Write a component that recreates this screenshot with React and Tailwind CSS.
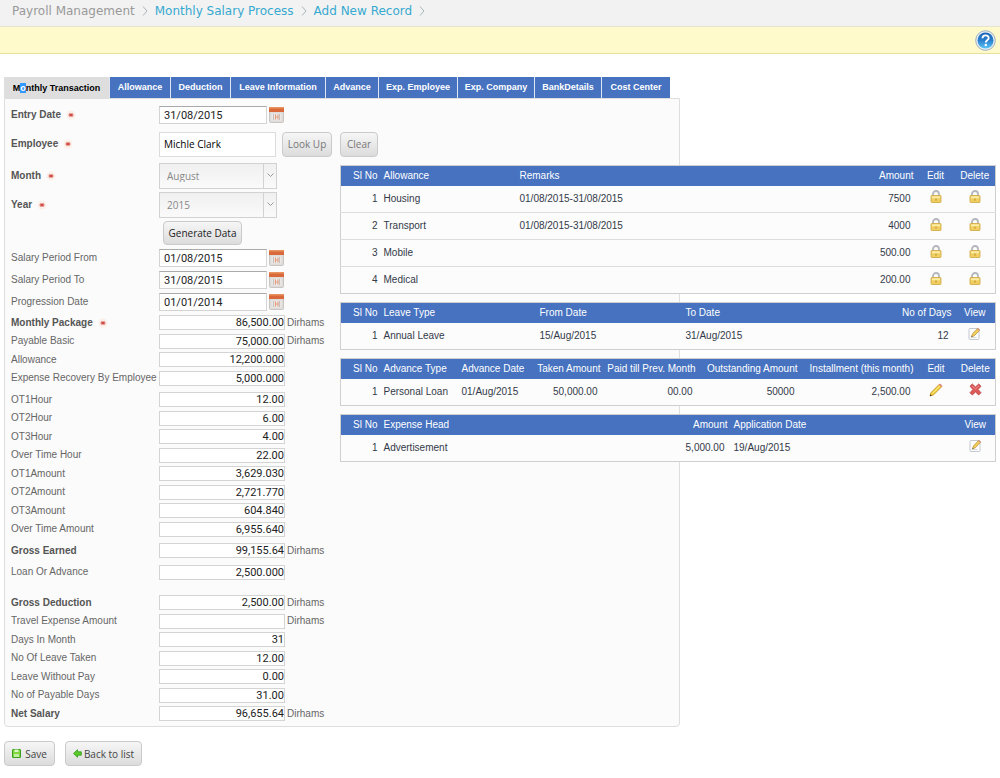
import React from 'react';

const tabs = [
  { label: 'Allowance', width: 'w-[61px]' },
  { label: 'Deduction', width: 'w-[60px]' },
  { label: 'Leave Information', width: 'w-[95px]' },
  { label: 'Advance', width: 'w-[53px]' },
  { label: 'Exp. Employee', width: 'w-[79px]' },
  { label: 'Exp. Company', width: 'w-[77px]' },
  { label: 'BankDetails', width: 'w-[67px]' },
  { label: 'Cost Center', width: 'w-[69px]' },
];

const dateRows = [
  { label: 'Salary Period From', value: '01/08/2015' },
  { label: 'Salary Period To', value: '31/08/2015' },
  { label: 'Progression Date', value: '01/01/2014' },
];

const packageRows = [
  { label: 'Monthly Package', value: '86,500.00', unit: true, bold: true, required: true },
  { label: 'Payable Basic', value: '75,000.00', unit: true },
  { label: 'Allowance', value: '12,200.000' },
  { label: 'Expense Recovery By Employee', value: '5,000.000' },
];

const overtimeRows = [
  { label: 'OT1Hour', value: '12.00' },
  { label: 'OT2Hour', value: '6.00' },
  { label: 'OT3Hour', value: '4.00' },
  { label: 'Over Time Hour', value: '22.00' },
  { label: 'OT1Amount', value: '3,629.030' },
  { label: 'OT2Amount', value: '2,721.770' },
  { label: 'OT3Amount', value: '604.840' },
  { label: 'Over Time Amount', value: '6,955.640' },
];

const earnedRows = [
  { label: 'Gross Earned', value: '99,155.64', unit: true, bold: true },
  { label: 'Loan Or Advance', value: '2,500.000' },
];

const deductionRows = [
  { label: 'Gross Deduction', value: '2,500.00', unit: true, bold: true },
  { label: 'Travel Expense Amount', value: '', unit: true },
  { label: 'Days In Month', value: '31' },
  { label: 'No Of Leave Taken', value: '12.00' },
  { label: 'Leave Without Pay', value: '0.00' },
  { label: 'No of Payable Days', value: '31.00' },
  { label: 'Net Salary', value: '96,655.64', unit: true, bold: true },
];

const allowanceTable = {
  columns: [
    { label: 'Sl No', width: 'w-[40px]', right: true },
    { label: 'Allowance', width: 'w-[136px]' },
    { label: 'Remarks', width: 'w-auto' },
    { label: 'Amount', width: 'w-[70px]', right: true, number: true },
    { label: 'Edit', width: 'w-[38px]', icon: 'lock' },
    { label: 'Delete', width: 'w-[41px]', icon: 'lock' },
  ],
  rows: [
    ['1', 'Housing', '01/08/2015-31/08/2015', '7500'],
    ['2', 'Transport', '01/08/2015-31/08/2015', '4000'],
    ['3', 'Mobile', '', '500.00'],
    ['4', 'Medical', '', '200.00'],
  ],
};

const leaveTable = {
  columns: [
    { label: 'Sl No', width: 'w-[40px]', right: true },
    { label: 'Leave Type', width: 'w-[156px]' },
    { label: 'From Date', width: 'w-[146px]' },
    { label: 'To Date', width: 'w-auto' },
    { label: 'No of Days', width: 'w-[90px]', right: true, number: true },
    { label: 'View', width: 'w-[41px]', icon: 'note' },
  ],
  rows: [['1', 'Annual Leave', '15/Aug/2015', '31/Aug/2015', '12']],
};

const advanceTable = {
  columns: [
    { label: 'Sl No', width: 'w-[40px]', right: true },
    { label: 'Advance Type', width: 'w-[78px]' },
    { label: 'Advance Date', width: 'w-[72px]' },
    { label: 'Taken Amount', width: 'w-[73px]', right: true, number: true },
    { label: 'Paid till Prev. Month', width: 'w-[95px]', right: true, number: true },
    { label: 'Outstanding Amount', width: 'w-[102px]', right: true, number: true },
    { label: 'Installment (this month)', width: 'w-auto', right: true, number: true },
    { label: 'Edit', width: 'w-[39px]', icon: 'pencil' },
    { label: 'Delete', width: 'w-[40px]', icon: 'cross' },
  ],
  rows: [['1', 'Personal Loan', '01/Aug/2015', '50,000.00', '00.00', '50000', '2,500.00']],
};

const expenseTable = {
  columns: [
    { label: 'Sl No', width: 'w-[40px]', right: true },
    { label: 'Expense Head', width: 'w-[240px]' },
    { label: 'Amount', width: 'w-[110px]', right: true, number: true },
    { label: 'Application Date', width: 'w-auto' },
    { label: 'View', width: 'w-[40px]', icon: 'note' },
  ],
  rows: [['1', 'Advertisement', '5,000.00', '19/Aug/2015']],
};

const LockIcon = () => (
  <svg width="12" height="13" viewBox="0 0 12 13" aria-hidden="true">
    <path d="M3 7V4a3 3 0 0 1 6 0v3" fill="none" stroke="#b4b7bd" strokeWidth="1.8" />
    <rect x="1" y="5.5" width="10" height="7" rx="0.8" fill="#efce62" stroke="#cfa63c" strokeWidth="0.8" />
    <rect x="2" y="6.3" width="8" height="2" fill="#fbeca6" />
    <rect x="5.4" y="8.5" width="1.2" height="2.2" fill="#c79a2b" />
  </svg>
);

const NoteIcon = () => (
  <svg width="13" height="13" viewBox="0 0 13 13" aria-hidden="true">
    <rect x="1" y="1.5" width="10" height="11" rx="1" fill="#fdfdfd" stroke="#c4c8cf" />
    <path d="M2.5 10.5h6" stroke="#d5d9de" />
    <path d="M3.5 9.8l.9-2.8 5.2-5.6 2 1.8-5.3 5.6z" fill="#f1cf5b" stroke="#b58a34" strokeWidth="0.7" />
    <path d="M9 2l.9-1 2 1.8-.9 1z" fill="#de8f80" />
    <path d="M3.4 10l.4-1.3.9.8z" fill="#4f4a3c" />
  </svg>
);

const PencilIcon = () => (
  <svg width="14" height="14" viewBox="0 0 14 14" aria-hidden="true">
    <path d="M1 13l1.2-3.6L10.4 1.2l2.4 2.4-8.2 8.2z" fill="#f5cf3a" stroke="#b98c1e" strokeWidth="0.8" />
    <path d="M3.4 10.4L11.3 2.500" stroke="#fdf0a4" strokeWidth="0.9" />
    <path d="M9.800 1.800l.8-.9c.8-.6 2.900 1.400 2.300 2.400l-.8.9z" fill="#e08c76" />
    <path d="M.8 13.200l.6-2 1.400 1.400z" fill="#4a3f28" />
  </svg>
);

const CrossIcon = () => (
  <svg width="13" height="13" viewBox="0 0 13 13" aria-hidden="true">
    <path
      d="M1 3.200L3.300 1l3.200 3L9.700 1 12 3.200 9 6.500l3 3.200L9.700 12 6.500 9l-3.200 3L1 9.700l3-3.200z"
      fill="#dc5a58"
      stroke="#b93a3c"
      strokeWidth="0.8"
      strokeLinejoin="round"
    />
    <path d="M3 2.800l3.500 3.200L10 2.800" fill="none" stroke="#ee9a96" strokeWidth="0.9" />
  </svg>
);

const CalendarIcon = () => (
  <svg width="15" height="16" viewBox="0 0 15 16" aria-hidden="true">
    <rect x="0.500" y="0.500" width="14" height="15" rx="1" fill="#dedbd9" stroke="#c9c5c2" />
    <path d="M0 1a1 1 0 0 1 1-1h13a1 1 0 0 1 1 1v4H0z" fill="#d9693a" />
    <path d="M0 1a1 1 0 0 1 1-1h13a1 1 0 0 1 1 1v.5H0z" fill="#e8935f" />
    <rect x="2.500" y="6.500" width="10" height="7" fill="#eae7e5" />
    <path d="M4.500 7v6M10.500 7v6" stroke="#c6c0bc" />
    <path d="M6.500 7.500v5M9 7.500v5M6.500 10H9" stroke="#e79a7c" />
  </svg>
);

const HelpIcon = () => (
  <svg width="21" height="21" viewBox="0 0 21 21" aria-hidden="true">
    <defs>
      <linearGradient id="help-fill" x1="0" y1="0" x2="0" y2="1">
        <stop offset="0" stopColor="#1d62b4" />
        <stop offset="0.5" stopColor="#2a80cf" />
        <stop offset="1" stopColor="#5cc6f5" />
      </linearGradient>
    </defs>
    <circle cx="10.500" cy="10.500" r="9.800" fill="#e9eef3" stroke="#93a7bb" strokeWidth="0.9" />
    <circle cx="10.500" cy="10.500" r="8" fill="url(#help-fill)" />
    <path d="M7.500 8.200c0-3.800 6.200-3.700 6.200-.2 0 2.300-2.900 2.300-2.900 4.400" fill="none" stroke="#fff" strokeWidth="1.900" />
    <circle cx="10.800" cy="15" r="1.200" fill="#fff" />
  </svg>
);

const SaveIcon = () => (
  <svg width="9" height="9" viewBox="0 0 9 9" aria-hidden="true">
    <rect x="0.500" y="0.500" width="8" height="8" rx="0.500" fill="#7fd63f" stroke="#3a9d1c" />
    <rect x="2.500" y="0.500" width="4" height="2.500" fill="#d9f5c4" />
    <rect x="2" y="5" width="5" height="3" fill="#c3efa2" />
  </svg>
);

const BackIcon = () => (
  <svg width="9" height="9" viewBox="0 0 9 9" aria-hidden="true">
    <path d="M.5 4.500L4.500.7v2.100h3.800v3.400H4.500v2.100z" fill="#5ccb2c" stroke="#2f9a16" strokeWidth="0.8" strokeLinejoin="round" />
  </svg>
);

const RequiredMark = () => (
  <svg className="ml-[5px] shrink-0" width="10" height="10" viewBox="0 0 10 10" aria-hidden="true">
    <circle cx="5" cy="5" r="4.500" fill="#fbf0e9" />
    <path d="M2.500 5h5M3.600 3.300l2.800 3.400M6.400 3.300L3.600 6.700" stroke="#cf4a43" strokeWidth="1.100" />
  </svg>
);

const CrumbArrow = () => (
  <svg className="mx-[7px]" width="6" height="10" viewBox="0 0 6 10" aria-hidden="true">
    <path d="M1 .5L5 5 1 9.500" fill="none" stroke="#a5b4bb" />
  </svg>
);

const icons = { lock: LockIcon, note: NoteIcon, pencil: PencilIcon, cross: CrossIcon };

const inputFont = 'font-["Liberation_Sans_Narrow","Roboto",sans-serif]';
const buttonStyle =
  'flex items-center justify-center rounded border border-[#cacaca] bg-linear-to-b from-[#f6f6f6] to-[#dcdcdc] font-["Open_Sans",sans-serif] text-[10px]';

const toId = (label) => label.toLowerCase().replace(/[^a-z0-9]+/g, '-');

const FieldLabel = ({ htmlFor, bold, required, children }) => (
  <label
    htmlFor={htmlFor}
    className={`flex w-[148px] shrink-0 items-center whitespace-nowrap ${bold ? 'font-bold text-[#555]' : 'text-[#666]'}`}
  >
    {children}
    {required && <RequiredMark />}
  </label>
);

const DateField = ({ label, value, bold, required }) => (
  <>
    <FieldLabel htmlFor={toId(label)} bold={bold} required={required}>{label}</FieldLabel>
    <input
      id={toId(label)}
      defaultValue={value}
      className={`h-[18px] w-[108px] border border-[#d4d4d4] border-t-[#aaa] bg-white px-1 text-[11px] text-[#222] ${inputFont}`}
    />
    <button type="button" aria-label={`Pick ${label}`} className="ml-[2px]">
      <CalendarIcon />
    </button>
  </>
);

const AmountRow = ({ row }) => (
  <div className="flex items-center odd:h-[19px] even:h-[18px]">
    <FieldLabel htmlFor={`amount-${toId(row.label)}`} bold={row.bold} required={row.required}>
      {row.label}
    </FieldLabel>
    <input
      id={`amount-${toId(row.label)}`}
      defaultValue={row.value}
      className={`h-[15px] w-[126px] border border-[#d4d4d4] bg-white text-right text-[11px] text-[#222] ${inputFont}`}
    />
    {row.unit && <span className="ml-[2px] text-[#666]">Dirhams</span>}
  </div>
);

const SelectField = ({ label, value }) => (
  <div className="flex h-[29px] items-center">
    <FieldLabel htmlFor={toId(label)} bold required>{label}</FieldLabel>
    <div className="relative">
      <select
        id={toId(label)}
        disabled
        className="h-[26px] w-[118px] appearance-none border border-[#d2d2d2] bg-linear-to-b from-[#f0f0f0] to-[#fafafa] px-[7px] font-['Open_Sans',sans-serif] text-[10px] text-[#888] opacity-100"
      >
        <option>{value}</option>
      </select>
      <span className="pointer-events-none absolute inset-y-0 right-0 flex w-[14px] items-center justify-center border border-[#d2d2d2]">
        <svg width="7" height="5" viewBox="0 0 7 5" aria-hidden="true">
          <path d="M.5.5l3 3 3-3" fill="none" stroke="#999" />
        </svg>
      </span>
    </div>
  </div>
);

const DataTable = ({ table }) => (
  <table className="w-full table-fixed border-collapse border border-[#cfcfcf] bg-[#fcfcfc] text-left whitespace-nowrap">
    <colgroup>
      {table.columns.map((col) => (
        <col key={col.label} className={col.width} />
      ))}
    </colgroup>
    <thead>
      <tr className="h-5 bg-[#4672c0] text-white">
        {table.columns.map((col) => (
          <th
            key={col.label}
            className={`p-0 font-normal ${col.icon ? 'text-center' : 'px-[3px]'} ${col.right ? 'text-right' : ''}`}
          >
            {col.label}
          </th>
        ))}
      </tr>
    </thead>
    <tbody>
      {table.rows.map((row) => (
        <tr key={row[0]} className="h-[27px] border-t border-[#dcdcdc] text-[#333a48] first:border-t-0">
          {table.columns.map((col, i) => {
            const Icon = icons[col.icon];
            return Icon ? (
              <td key={col.label} className="p-0">
                <button type="button" aria-label={`${col.label} ${row[1]}`} className="mx-auto flex pb-1">
                  <Icon />
                </button>
              </td>
            ) : (
              <td key={col.label} className={`py-0 ${col.number ? 'px-[6px]' : 'px-[3px]'} ${col.right ? 'text-right' : ''}`}>
                {row[i]}
              </td>
            );
          })}
        </tr>
      ))}
    </tbody>
  </table>
);

const App = () => {
  return (
    <div className="min-h-screen bg-white font-['Liberation_Sans',Arial,sans-serif] text-[10px] leading-3">
      <nav className="flex h-[26px] items-center bg-[#f2f2f2] px-3 pb-1 font-['DejaVu_Sans',Verdana,sans-serif] text-xs leading-4">
        <span className="text-[#999]">Payroll Management</span>
        <CrumbArrow />
        <a href="#process" className="text-[#36a9d0]">Monthly Salary Process</a>
        <CrumbArrow />
        <a href="#new" className="text-[#36a9d0]">Add New Record</a>
        <CrumbArrow />
      </nav>
      <div className="flex h-7 items-center justify-end border-y border-t-[#e6e4cc] border-b-[#e6e29c] bg-[#fefacb] pr-1">
        <button type="button" aria-label="Help">
          <HelpIcon />
        </button>
      </div>

      <main className="px-1 pt-[23px]">
        <div className="flex text-[9px] font-bold">
          <button type="button" className="h-[21px] w-[105px] bg-[#dedede] text-black">
            M<span className="bg-[#3399ff] text-white">o</span>nthly Transaction
          </button>
          {tabs.map((tab) => (
            <button
              key={tab.label}
              type="button"
              className={`h-[21px] border-l border-[#dfe6f3] bg-[#4672c0] pb-[2px] whitespace-nowrap text-white ${tab.width}`}
            >
              {tab.label}
            </button>
          ))}
        </div>

        {/* the record tables run past the right edge of the form panel */}
        <div className="grid grid-cols-[336px_340px_1fr]">
          <form className="col-span-2 col-start-1 row-start-1 rounded-b-sm border border-[#dedede] bg-[#fbfbfb] px-[6px] pt-px pb-[3px]">
            <div className="flex h-[30px] items-center">
              <DateField label="Entry Date" value="31/08/2015" bold required />
            </div>
            <div className="flex h-[28px] items-center">
              <FieldLabel htmlFor="employee" bold required>Employee</FieldLabel>
              <input
                id="employee"
                defaultValue="Michle Clark"
                className="h-[25px] w-[117px] border border-[#dcdcdc] bg-white px-1 font-['Open_Sans',sans-serif] text-[10px] text-black"
              />
              <button type="button" className={`ml-[6px] h-[25px] w-[50px] text-[#777] ${buttonStyle}`}>Look Up</button>
              <button type="button" className={`ml-2 h-[25px] w-[38px] text-[#777] ${buttonStyle}`}>Clear</button>
            </div>
            <div className="pt-[3px]">
              <SelectField label="Month" value="August" />
              <SelectField label="Year" value="2015" />
            </div>
            <div className="flex h-[28px] items-center pl-[152px]">
              <button type="button" className={`h-6 w-[79px] text-[#222] ${buttonStyle}`}>Generate Data</button>
            </div>
            {dateRows.map((row) => (
              <div key={row.label} className="flex h-[22px] items-center">
                <DateField label={row.label} value={row.value} />
              </div>
            ))}
            <div>
              {packageRows.map((row) => <AmountRow key={row.label} row={row} />)}
            </div>
            <div className="pt-[3px]">
              {overtimeRows.map((row) => <AmountRow key={row.label} row={row} />)}
            </div>
            <div className="flex flex-col gap-[3px] pt-[3px]">
              {earnedRows.map((row) => <AmountRow key={row.label} row={row} />)}
            </div>
            <div className="pt-3">
              {deductionRows.map((row) => <AmountRow key={row.label} row={row} />)}
            </div>
          </form>

          <div className="z-10 col-span-2 col-start-2 row-start-1 flex flex-col gap-2 self-start pt-[67px]">
            <DataTable table={allowanceTable} />
            <DataTable table={leaveTable} />
            <DataTable table={advanceTable} />
            <DataTable table={expenseTable} />
          </div>
        </div>

        <div className="flex gap-[10px] py-[14px]">
          <button type="button" className={`h-[25px] w-[51px] gap-1 text-[#444] ${buttonStyle}`}>
            <SaveIcon />
            Save
          </button>
          <button type="button" className={`h-[25px] w-[77px] gap-[2px] text-[#444] ${buttonStyle}`}>
            <BackIcon />
            Back to list
          </button>
        </div>
      </main>
    </div>
  );
};

export default App;
